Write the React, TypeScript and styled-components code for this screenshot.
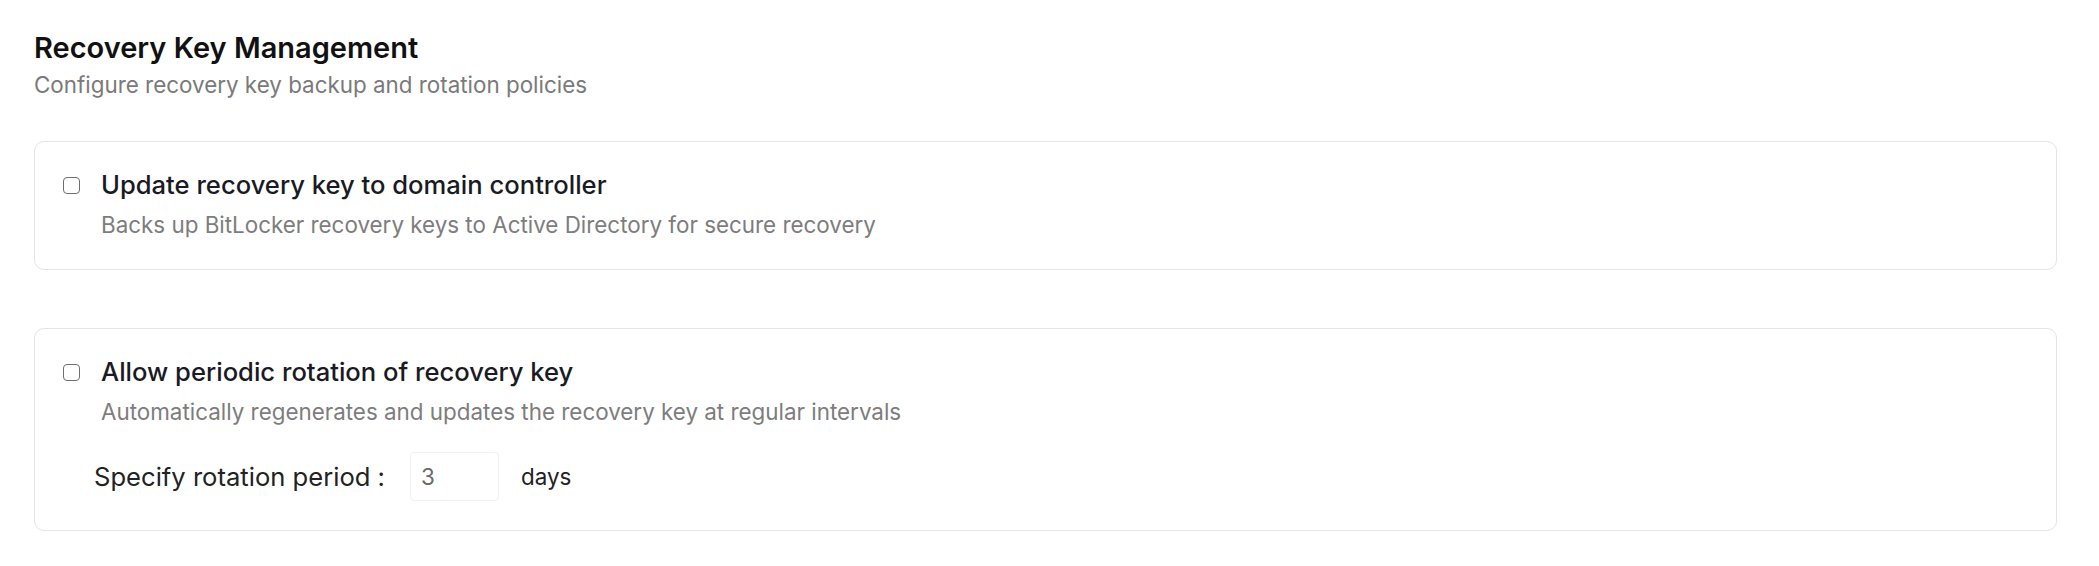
import React, { useState } from "react";
import styled, { createGlobalStyle } from "styled-components";

const GlobalStyle = createGlobalStyle`
    html, body {
        margin: 0;
        padding: 0;
        background: #ffffff;
        font-family: Inter, "Noto Sans", "Liberation Sans", sans-serif;
    }
`;

const Page = styled.div`
    padding: 30px 42px 0 34px;
    display: flex;
    flex-direction: column;
`;

const Header = styled.div`
    display: flex;
    flex-direction: column;
    margin-bottom: 41px;
`;

const Title = styled.h2`
    margin: 0;
    font-size: 29px;
    line-height: 36px;
    font-weight: 600;
    color: #111111;
`;

const Subtitle = styled.p`
    margin: 4px 0 0;
    font-size: 22.4px;
    line-height: 30px;
    color: #7a7a7a;
`;

const Sections = styled.div`
    display: flex;
    flex-direction: column;
    gap: 58px;
`;

const Card = styled.div`
    border: 1.3px solid #e4e4e4;
    border-radius: 10px;
    padding: 26px 27px 29px 28px;
    display: flex;
    flex-direction: column;
`;

const OptionRow = styled.label`
    display: flex;
    align-items: center;
    gap: 21px;
    cursor: pointer;
`;

const Box = styled.span<{ $checked: boolean }>`
    width: 15px;
    height: 15px;
    flex: none;
    border: 1.4px solid #6e6e6e;
    border-radius: 4px;
    background: ${(p) => (p.$checked ? "#1a73e8" : "#ffffff")};
    margin-top: 1px;
`;

const OptionTitle = styled.span`
    font-size: 25.6px;
    line-height: 34px;
    font-weight: 500;
    color: #1a1a24;
`;

const OptionDescription = styled.p`
    margin: 8px 0 0 38px;
    font-size: 22.4px;
    line-height: 30px;
    color: #7d7d7d;
`;

const PeriodRow = styled.div`
    display: flex;
    align-items: center;
    margin: 25px 0 0 31px;
`;

const PeriodLabel = styled.span`
    font-size: 25.6px;
    line-height: 34px;
    color: #222222;
    margin-right: 25px;
`;

const PeriodInput = styled.input`
    width: 89px;
    height: 49px;
    box-sizing: border-box;
    border: 1px solid #f1f1f1;
    border-radius: 4px;
    padding: 0 10px;
    font-family: inherit;
    font-size: 22.4px;
    color: #6a6a6a;
    outline: none;
`;

const Unit = styled.span`
    margin-left: 22px;
    font-size: 22.4px;
    color: #222222;
`;

interface IOption {
    title: string;
    description: string;
}

const Option = ({ title, description }: IOption) => {
    const [checked, setChecked] = useState(false);
    return (
        <>
            <OptionRow onClick={() => setChecked(!checked)}>
                <Box $checked={checked} />
                <OptionTitle>{title}</OptionTitle>
            </OptionRow>
            <OptionDescription>{description}</OptionDescription>
        </>
    );
};

const App = () => {
    const [period, setPeriod] = useState("3");

    return (
        <Page>
            <GlobalStyle />
            <Header>
                <Title>Recovery Key Management</Title>
                <Subtitle>Configure recovery key backup and rotation policies</Subtitle>
            </Header>
            <Sections>
                <Card>
                    <Option
                        title="Update recovery key to domain controller"
                        description="Backs up BitLocker recovery keys to Active Directory for secure recovery"
                    />
                </Card>
                <Card>
                    <Option
                        title="Allow periodic rotation of recovery key"
                        description="Automatically regenerates and updates the recovery key at regular intervals"
                    />
                    <PeriodRow>
                        <PeriodLabel>Specify rotation period :</PeriodLabel>
                        <PeriodInput value={period} onChange={(e) => setPeriod(e.target.value)} />
                        <Unit>days</Unit>
                    </PeriodRow>
                </Card>
            </Sections>
        </Page>
    );
};

export default App;
